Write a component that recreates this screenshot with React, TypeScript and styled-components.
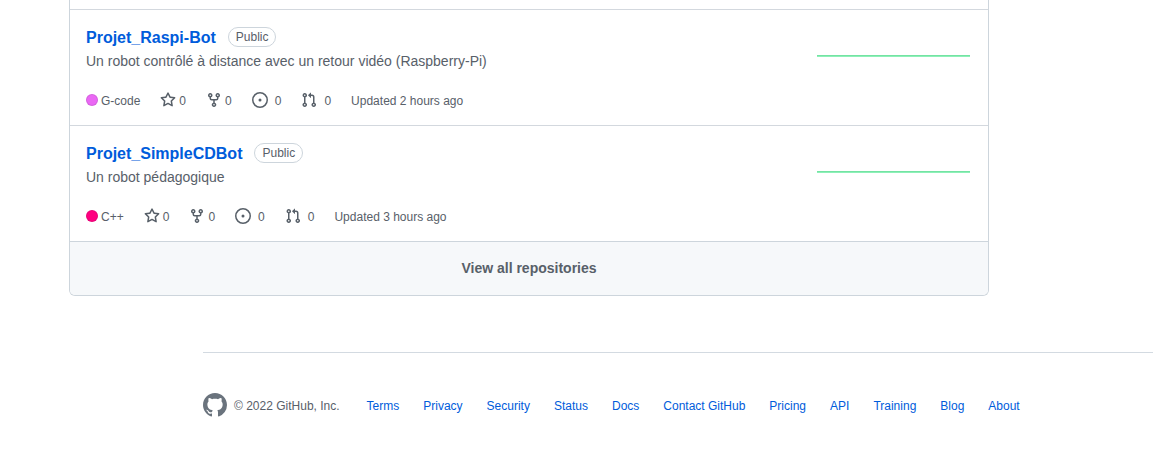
import React from "react";
import styled, { createGlobalStyle } from "styled-components";

const GlobalStyle = createGlobalStyle`
  *, *::before, *::after { box-sizing: border-box; }
  body {
    margin: 0;
    background: #fff;
    color: #586069;
    font-family: "Liberation Sans", Arial, sans-serif;
    font-size: 14px;
    line-height: 20px;
  }
  a { color: #005cdb; text-decoration: none; }
  a:hover { text-decoration: underline; }
`;

const Card = styled.section`
  margin: 0 164px 0 69px;
  border: 1px solid #cdd5dc;
  border-top: 0;
  border-radius: 0 0 6px 6px;
  overflow: hidden;
`;

const RepoList = styled.ul`
  margin: 0;
  padding: 9px 0 0;
  list-style: none;
`;

const RepoRow = styled.li`
  display: flex;
  justify-content: space-between;
  align-items: flex-start;
  padding: 16px 18px 16px 16px;
  border-top: 1px solid #d3d8de;
`;

const RepoInfo = styled.div`
  min-width: 0;
`;

const Heading = styled.div`
  display: flex;
  align-items: flex-start;
  gap: 12px;
  height: 23px;
`;

const RepoName = styled.h3`
  margin: 0;
  font-size: 16px;
  line-height: 23px;
  font-weight: 700;
`;

const Label = styled.span`
  margin-top: 1px;
  padding: 0 7px;
  border: 1px solid #cdd5dc;
  border-radius: 20px;
  font-size: 12px;
  line-height: 18px;
`;

const Description = styled.p`
  margin: 2px 0 20px;
`;

const Meta = styled.div`
  display: flex;
  align-items: center;
  gap: 20px;
  height: 18px;
  font-size: 12px;
  line-height: 18px;
`;

const Language = styled.span`
  display: flex;
  align-items: center;
  gap: 3px;
`;

const LanguageDot = styled.span<{ $color: string }>`
  width: 12px;
  height: 12px;
  border: 1px solid rgba(27, 31, 35, 0.1);
  border-radius: 50%;
  background: ${(p) => p.$color};
`;

const Count = styled.a<{ $wide?: boolean }>`
  && { color: #586069; }
  display: flex;
  align-items: center;
  gap: ${(p) => (p.$wide ? 7 : 3)}px;
`;

const MetaText = styled.span`
  padding-top: 2px;
`;

const Icon = styled.svg`
  display: block;
  flex: none;
  fill: currentColor;
`;

const Sparkline = styled.svg`
  display: block;
  flex: none;
  margin-top: 14px;
`;

const ViewAll = styled.a`
  && { color: #586069; }
  display: block;
  padding: 16px;
  border-top: 1px solid #cdd5dc;
  background: #f6f8fa;
  font-weight: 700;
  line-height: 21px;
  text-align: center;
`;

const Footer = styled.footer`
  display: flex;
  align-items: center;
  margin: 56px 0 0 203px;
  padding: 40px 0;
  border-top: 1px solid #d3dae1;
  font-size: 12px;
  line-height: 18px;
`;

const Logo = styled.a`
  && { color: #6a737d; }
  margin-right: 7px;
`;

const Copyright = styled.span`
  padding-top: 2px;
  white-space: nowrap;
`;

const FooterNav = styled.nav`
  display: flex;
  gap: 24px;
  margin-left: 27px;
  padding-top: 2px;
  white-space: nowrap;
`;

const icons = {
  star: "M8 .25a.75.75 0 01.673.418l1.882 3.815 4.21.612a.75.75 0 01.416 1.279l-3.046 2.97.719 4.192a.75.75 0 01-1.088.791L8 12.347l-3.766 1.98a.75.75 0 01-1.088-.79l.72-4.194L.818 6.374a.75.75 0 01.416-1.28l4.21-.611L7.327.668A.75.75 0 018 .25zm0 2.445L6.615 5.5a.75.75 0 01-.564.41l-3.097.45 2.24 2.184a.75.75 0 01.216.664l-.528 3.084 2.769-1.456a.75.75 0 01.698 0l2.77 1.456-.53-3.084a.75.75 0 01.216-.664l2.24-2.183-3.096-.45a.75.75 0 01-.564-.41L8 2.694v.001z",
  fork: "M5 3.25a.75.75 0 11-1.5 0 .75.75 0 011.5 0zm0 2.122a2.25 2.25 0 10-1.5 0v.878A2.25 2.25 0 005.75 8.5h1.5v2.128a2.251 2.251 0 101.5 0V8.5h1.5a2.25 2.25 0 002.25-2.25v-.878a2.25 2.25 0 10-1.5 0v.878a.75.75 0 01-.75.75h-4.5A.75.75 0 015 6.25v-.878zm3.75 7.378a.75.75 0 11-1.5 0 .75.75 0 011.5 0zm3-8.75a.75.75 0 100-1.5.75.75 0 000 1.5z",
  issue: "M8 9.5a1.5 1.5 0 100-3 1.5 1.5 0 000 3zM8 0a8 8 0 100 16A8 8 0 008 0zM1.5 8a6.5 6.5 0 1113 0 6.5 6.5 0 01-13 0z",
  pull: "M7.177 3.073L9.573.677A.25.25 0 0110 .854v4.792a.25.25 0 01-.427.177L7.177 3.427a.25.25 0 010-.354zM3.75 2.5a.75.75 0 100 1.5.75.75 0 000-1.5zm-2.25.75a2.25 2.25 0 113 2.122v5.256a2.251 2.251 0 11-1.5 0V5.372A2.25 2.25 0 011.5 3.25zM11 2.5h-1V4h1a1 1 0 011 1v5.628a2.251 2.251 0 101.5 0V5A2.5 2.5 0 0011 2.5zm1 10.25a.75.75 0 111.5 0 .75.75 0 01-1.5 0zM3.75 12a.75.75 0 100 1.5.75.75 0 000-1.5z",
  mark: "M8 0C3.58 0 0 3.58 0 8c0 3.54 2.29 6.53 5.47 7.59.4.07.55-.17.55-.38 0-.19-.01-.82-.01-1.49-2.01.37-2.53-.49-2.69-.94-.09-.23-.48-.94-.82-1.13-.28-.15-.68-.52-.01-.53.63-.01 1.08.58 1.23.82.72 1.21 1.87.87 2.33.66.07-.52.28-.87.51-1.07-1.78-.2-3.64-.89-3.64-3.95 0-.87.31-1.59.82-2.15-.08-.2-.36-1.02.08-2.12 0 0 .67-.21 2.2.82.64-.18 1.32-.27 2-.27.68 0 1.36.09 2 .27 1.53-1.04 2.2-.82 2.2-.82.44 1.1.16 1.92.08 2.12.51.56.82 1.27.82 2.15 0 3.07-1.87 3.75-3.65 3.95.29.25.54.73.54 1.48 0 1.07-.01 1.93-.01 2.2 0 .21.15.46.55.38A8.013 8.013 0 0016 8c0-4.42-3.58-8-8-8z",
};

type IconName = keyof typeof icons;

function Octicon({ name, size = 16 }: { name: IconName; size?: number }) {
  return (
    <Icon width={size} height={size} viewBox="0 0 16 16" aria-hidden="true">
      <path fillRule="evenodd" d={icons[name]} />
    </Icon>
  );
}

interface Repo {
  name: string;
  description: string;
  language: string;
  color: string;
  updated: string;
}

const repos: Repo[] = [
  {
    name: "Projet_Raspi-Bot",
    description: "Un robot contrôlé à distance avec un retour vidéo (Raspberry-Pi)",
    language: "G-code",
    color: "#ea68f4",
    updated: "Updated 2 hours ago",
  },
  {
    name: "Projet_SimpleCDBot",
    description: "Un robot pédagogique",
    language: "C++",
    color: "#ff0080",
    updated: "Updated 3 hours ago",
  },
];

const counters: { icon: IconName; label: string; wide?: boolean }[] = [
  { icon: "star", label: "Stars" },
  { icon: "fork", label: "Forks" },
  { icon: "issue", label: "Issues", wide: true },
  { icon: "pull", label: "Pull requests", wide: true },
];

const footerLinks = [
  "Terms", "Privacy", "Security", "Status", "Docs", "Contact GitHub",
  "Pricing", "API", "Training", "Blog", "About",
];

function RepoItem({ repo }: { repo: Repo }) {
  return (
    <RepoRow>
      <RepoInfo>
        <Heading>
          <RepoName><a href="#">{repo.name}</a></RepoName>
          <Label>Public</Label>
        </Heading>
        <Description>{repo.description}</Description>
        <Meta>
          <Language>
            <LanguageDot $color={repo.color} />
            <MetaText>{repo.language}</MetaText>
          </Language>
          {counters.map((c) => (
            <Count key={c.icon} href="#" title={c.label} $wide={c.wide}>
              <Octicon name={c.icon} />
              <MetaText>0</MetaText>
            </Count>
          ))}
          <MetaText>{repo.updated}</MetaText>
        </Meta>
      </RepoInfo>
      <Sparkline width="153" height="30" viewBox="0 0 153 30" aria-hidden="true">
        <rect y="15" width="153" height="1" fill="#74e3a3" />
        <rect y="16" width="153" height="1" fill="#8df0b8" />
      </Sparkline>
    </RepoRow>
  );
}

export default function App() {
  return (
    <>
      <GlobalStyle />
      <main>
        <Card>
          <RepoList>
            {repos.map((repo) => <RepoItem key={repo.name} repo={repo} />)}
          </RepoList>
          <ViewAll href="#">View all repositories</ViewAll>
        </Card>
      </main>
      <Footer>
        <Logo href="#" aria-label="GitHub"><Octicon name="mark" size={24} /></Logo>
        <Copyright>© 2022 GitHub, Inc.</Copyright>
        <FooterNav>
          {footerLinks.map((text) => <a key={text} href="#">{text}</a>)}
        </FooterNav>
      </Footer>
    </>
  );
}
